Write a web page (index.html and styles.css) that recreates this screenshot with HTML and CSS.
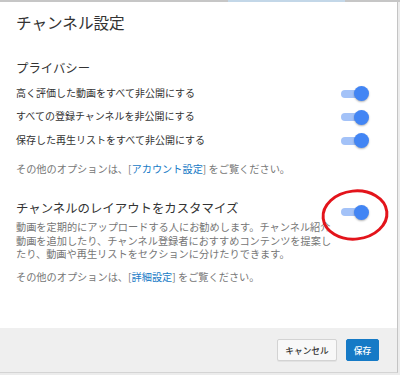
FILE: index.html
```html
<!DOCTYPE html>
<html lang="ja">

<head>
    <meta charset="UTF-8">
    <meta name="viewport" content="width=device-width, initial-scale=1.0">
    <title>チャンネル設定</title>
    <link rel="stylesheet" href="styles.css">
</head>

<body>
    <div class="barra_topo"><div class="barra_azul"></div></div>
    <div class="dialogo">
        <div class="conteudo">
            <h1 class="titulo">チャンネル設定</h1>

            <h2 class="secao">プライバシー</h2>
            <div class="linhas">
                <div class="linha">
                    <span>高く評価した動画をすべて非公開にする</span>
                    <div class="chave"><div class="trilho"></div><div class="botao"></div></div>
                </div>
                <div class="linha">
                    <span>すべての登録チャンネルを非公開にする</span>
                    <div class="chave"><div class="trilho"></div><div class="botao"></div></div>
                </div>
                <div class="linha">
                    <span>保存した再生リストをすべて非公開にする</span>
                    <div class="chave"><div class="trilho"></div><div class="botao"></div></div>
                </div>
            </div>
            <p class="info">その他のオプションは、[<a href="#">アカウント設定</a>] をご覧ください。</p>

            <div class="layout">
                <div class="layout_texto">
                    <h2 class="secao_layout">チャンネルのレイアウトをカスタマイズ</h2>
                    <p class="descricao">動画を定期的にアップロードする人にお勧めします。チャンネル紹介動画を追加したり、チャンネル登録者におすすめコンテンツを提案したり、動画や再生リストをセクションに分けたりできます。</p>
                </div>
                <div class="chave chave_layout"><div class="trilho"></div><div class="botao"></div></div>
            </div>
            <p class="info info_2">その他のオプションは、[<a href="#">詳細設定</a>] をご覧ください。</p>
        </div>
        <div class="rodape">
            <button class="btn btn_cancelar">キャンセル</button>
            <button class="btn btn_salvar">保存</button>
        </div>
    </div>

    <!-- marcação vermelha -->
    <svg class="marca" width="72" height="56" viewBox="0 0 72 56">
        <ellipse cx="36" cy="28" rx="32" ry="24" fill="none" stroke="#e3141b" stroke-width="3" transform="rotate(-6 36 28)" />
    </svg>
</body>

</html>
```

FILE: styles.css
```css
* {
    margin: 0;
    padding: 0;
    box-sizing: border-box;
}

body {
    width: 400px;
    height: 375px;
    background-color: #ececec;
    font-family: "Noto Sans CJK JP", "Noto Sans", sans-serif;
    color: #333;
    overflow: hidden;
    position: relative;
}

.barra_topo {
    height: 2px;
    background-color: #c6c6c6;
}

.barra_azul {
    margin-left: 228px;
    width: 117px;
    height: 2px;
    background-color: #c3d7e8;
}

.dialogo {
    width: 398px;
    height: 371px;
    background-color: #fff;
    border-right: 1px solid #c4c4c4;
    border-bottom: 1px solid #d4d4d4;
    display: flex;
    flex-direction: column;
}

.conteudo {
    flex: 1;
    padding: 10px 28px 0 16px;
}

.titulo {
    font-size: 15.6px;
    font-weight: normal;
    line-height: 20px;
}

.secao,
.secao_layout {
    font-size: 12.4px;
    font-weight: normal;
    line-height: 16px;
}

.secao {
    margin-top: 28px;
}

.linhas {
    margin-top: 4.5px;
}

.linha {
    height: 23.5px;
    display: flex;
    align-items: center;
    justify-content: space-between;
    font-size: 10px;
}

.chave {
    display: flex;
    align-items: center;
    width: 28px;
    margin-top: 3px;
}

.trilho {
    width: 22px;
    height: 8px;
    border-radius: 4px;
    background-color: #a3c2f8;
}

.botao {
    width: 15px;
    height: 15px;
    margin-left: -9px;
    border-radius: 50%;
    background-color: #4285f4;
    box-shadow: 0 1px 2px rgba(0, 0, 0, 0.3);
}

.info {
    margin-top: 11px;
    font-size: 10.2px;
    line-height: 14px;
    color: #767676;
}

.info a {
    color: #167ac6;
    text-decoration: none;
}

.layout {
    margin-top: 24px;
    display: flex;
    align-items: flex-start;
    gap: 8px;
}

.layout_texto {
    flex: 1;
}

.chave_layout {
    margin-top: 4.5px;
}

.descricao {
    margin-top: 4.25px;
    font-size: 10.2px;
    line-height: 13.5px;
    color: #767676;
}

.info_2 {
    margin-top: 9.25px;
}

.rodape {
    height: 44px;
    background-color: #efefef;
    display: flex;
    align-items: center;
    justify-content: flex-end;
    gap: 9px;
    padding-right: 18px;
}

.btn {
    height: 22px;
    padding: 0;
    font-family: "Noto Sans CJK JP", "Noto Sans", sans-serif;
    font-size: 8.7px;
    font-weight: 500;
    white-space: nowrap;
    border-radius: 2px;
}

.btn_cancelar {
    width: 60px;
    background-color: #f8f8f8;
    border: 1px solid #d3d3d3;
    color: #333;
    box-shadow: 0 1px 0 rgba(0, 0, 0, 0.05);
}

.btn_salvar {
    width: 33px;
    background-color: #167ac6;
    border: 1px solid #167ac6;
    color: #fff;
}

.marca {
    position: absolute;
    left: 319px;
    top: 187px;
}
```
